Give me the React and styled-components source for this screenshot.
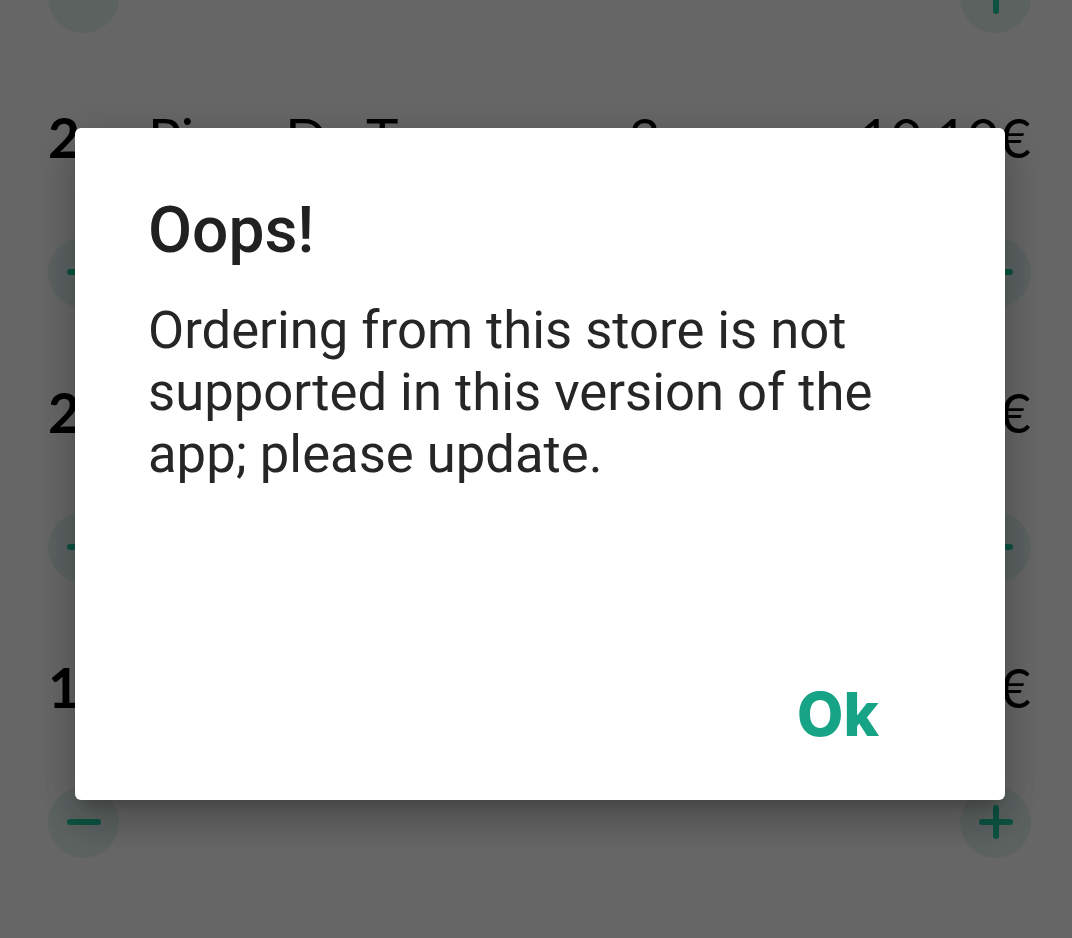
import React from "react";
import styled, {createGlobalStyle} from "styled-components";
import {Minus, Plus} from "lucide-react";

const items = [
    {id: 0, qty: "2x", name: "Pizza Margherita", extra: "", price: "8.50€"},
    {id: 1, qty: "2x", name: "Pizza Da Tomaso", extra: "3", price: "10.10€"},
    {id: 2, qty: "2x", name: "Pizza Salame", extra: "", price: "9.20€"},
    {id: 3, qty: "1x", name: "Tiramisù", extra: "", price: "4.50€"},
];

const App = () => {
    return (
        <>
            <GlobalStyle/>
            <Page>
                <List>
                    {items.map((item) => (
                        <Item key={item.id}>
                            <Line>
                                <Qty>{item.qty}</Qty>
                                <Name>{item.name}</Name>
                                <Extra>{item.extra}</Extra>
                                <Price>{item.price}</Price>
                            </Line>
                            <Controls>
                                <RoundButton aria-label="remove">
                                    <Minus size={48} strokeWidth={3}/>
                                </RoundButton>
                                <RoundButton aria-label="add">
                                    <Plus size={48} strokeWidth={3}/>
                                </RoundButton>
                            </Controls>
                        </Item>
                    ))}
                </List>
            </Page>
            <Scrim>
                <Dialog role="alertdialog">
                    <Title>Oops!</Title>
                    <Message>
                        Ordering from this store is not supported in this version of the
                        app; please update.
                    </Message>
                    <Actions>
                        <OkButton>Ok</OkButton>
                    </Actions>
                </Dialog>
            </Scrim>
        </>
    );
};

const GlobalStyle = createGlobalStyle`
  html, body {
    margin: 0;
    padding: 0;
    background: #ffffff;
    overflow: hidden;
  }
  * {
    box-sizing: border-box;
  }
`;

const Page = styled.div`
  width: 1072px;
  height: 938px;
  overflow: hidden;
  background: #ffffff;
`;

const List = styled.div`
  margin-top: -171px;
  display: flex;
  flex-direction: column;
`;

const Item = styled.div`
  display: flex;
  flex-direction: column;
  gap: 73px;
  padding: 0 41px 72px 48px;
`;

const Line = styled.div`
  height: 60px;
  display: grid;
  grid-template-columns: 100px 1fr 230px auto;
  align-items: center;
  font-family: "Lato", "Liberation Sans", sans-serif;
  font-size: 55px;
  color: #000000;
  white-space: nowrap;
`;

const Qty = styled.span`
  font-weight: 700;
`;

const Name = styled.span`
  font-weight: 400;
  overflow: hidden;
`;

const Extra = styled.span`
  font-weight: 400;
`;

const Price = styled.span`
  font-weight: 400;
  text-align: right;
`;

const Controls = styled.div`
  height: 70px;
  display: flex;
  justify-content: space-between;
  align-items: center;
`;

const RoundButton = styled.button`
  width: 71px;
  height: 71px;
  border-radius: 50%;
  border: none;
  padding: 0;
  background: #e4f5f0;
  color: #1fcfa5;
  display: flex;
  align-items: center;
  justify-content: center;
`;

const Scrim = styled.div`
  position: fixed;
  inset: 0;
  background: rgba(0, 0, 0, 0.6);
  padding: 128px 0 0 75px;
`;

const Dialog = styled.div`
  width: 930px;
  height: 672px;
  background: #ffffff;
  border-radius: 6px;
  padding: 71px 73px 57px 73px;
  display: flex;
  flex-direction: column;
  box-shadow: 0 11px 15px -7px rgba(0, 0, 0, 0.2),
  0 24px 38px 3px rgba(0, 0, 0, 0.14),
  0 9px 46px 8px rgba(0, 0, 0, 0.12);
`;

const Title = styled.h2`
  margin: 0;
  font-family: "Roboto", "Liberation Sans", sans-serif;
  font-weight: 500;
  font-size: 64px;
  line-height: 64px;
  color: #212121;
`;

const Message = styled.p`
  margin: 36px 0 0 0;
  font-family: "Roboto", "Liberation Sans", sans-serif;
  font-weight: 400;
  font-size: 52.6px;
  line-height: 62px;
  color: #262626;
`;

const Actions = styled.div`
  margin-top: auto;
  display: flex;
  justify-content: flex-end;
  padding-right: 53px;
`;

const OkButton = styled.button`
  border: none;
  background: none;
  padding: 0;
  font-family: "Inter", "Liberation Sans", sans-serif;
  font-weight: 800;
  font-size: 60px;
  line-height: 58px;
  color: #17a386;
`;

export default App;
